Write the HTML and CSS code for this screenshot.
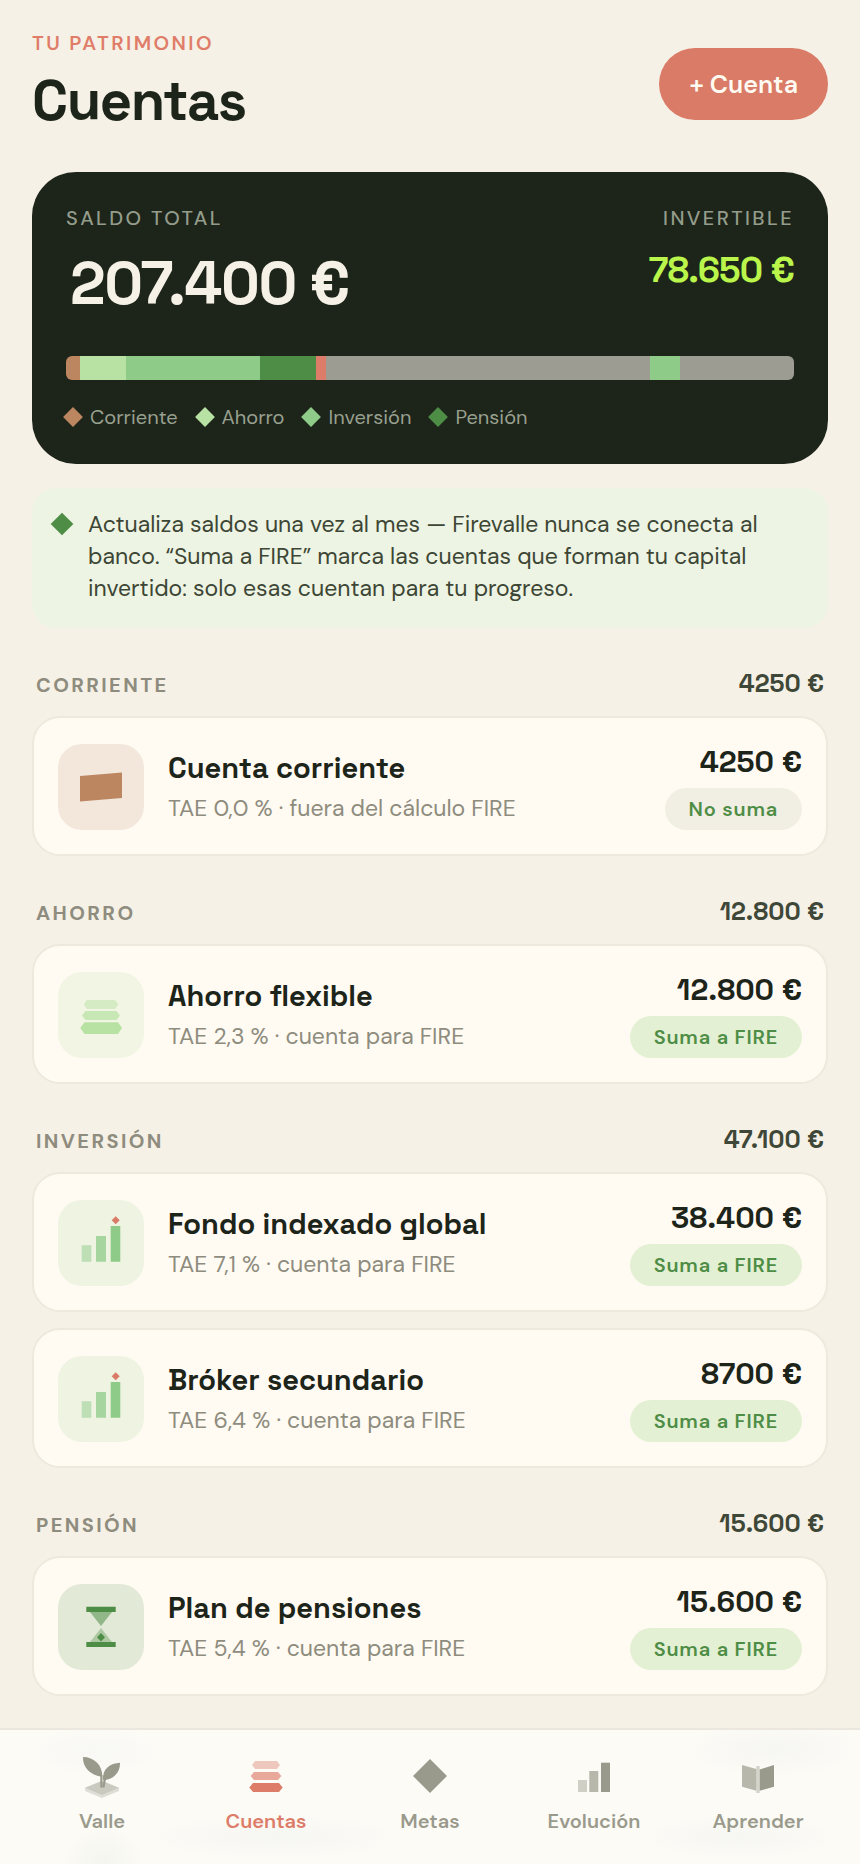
FILE: index.html
```
<!DOCTYPE html>
<html lang="es">
<head>
  <meta charset="UTF-8">
  <meta name="viewport" content="width=device-width, initial-scale=1">
  <title>Firevalle · Cuentas</title>
  <link rel="stylesheet" href="styles.css">
</head>
<body>

  <main class="page">
    <header class="page-header">
      <div>
        <p class="eyebrow">TU PATRIMONIO</p>
        <h1>Cuentas</h1>
      </div>
      <button class="add-btn" type="button">+ Cuenta</button>
    </header>

    <section class="balance">
      <div class="balance-top">
        <div>
          <p class="balance-label">SALDO TOTAL</p>
          <p class="balance-total">207.400 €</p>
        </div>
        <div class="balance-right">
          <p class="balance-label">INVERTIBLE</p>
          <p class="balance-invest">78.650 €</p>
        </div>
      </div>
      <div class="bar">
        <span class="corriente" style="flex-grow: 14"></span>
        <span class="ahorro" style="flex-grow: 46"></span>
        <span class="inversion" style="flex-grow: 134"></span>
        <span class="pension" style="flex-grow: 56"></span>
        <span class="deuda" style="flex-grow: 10"></span>
        <span class="otros" style="flex-grow: 324"></span>
        <span class="inversion" style="flex-grow: 30"></span>
        <span class="otros" style="flex-grow: 114"></span>
      </div>
      <ul class="legend">
        <li><i class="diamond corriente"></i>Corriente</li>
        <li><i class="diamond ahorro"></i>Ahorro</li>
        <li><i class="diamond inversion"></i>Inversión</li>
        <li><i class="diamond pension"></i>Pensión</li>
      </ul>
    </section>

    <aside class="tip">
      <i class="diamond pension"></i>
      <p>Actualiza saldos una vez al mes — Firevalle nunca se conecta al banco. “Suma a FIRE” marca las cuentas que forman tu capital invertido: solo esas cuentan para tu progreso.</p>
    </aside>

    <section class="group">
      <div class="group-head"><h2>CORRIENTE</h2><span>4250 €</span></div>
      <article class="account">
        <svg class="tile tile-corriente" viewBox="0 0 86 86" aria-hidden="true">
          <path d="M22 32 64 28.500V54L22 57.500Z"/>
        </svg>
        <div class="account-info">
          <h3>Cuenta corriente</h3>
          <p>TAE 0,0 % · fuera del cálculo FIRE</p>
        </div>
        <div class="account-side">
          <strong>4250 €</strong>
          <button class="pill pill-off" type="button">No suma</button>
        </div>
      </article>
    </section>

    <section class="group">
      <div class="group-head"><h2>AHORRO</h2><span>12.800 €</span></div>
      <article class="account">
        <svg class="tile tile-ahorro" viewBox="0 0 86 86" aria-hidden="true">
          <path opacity=".5" d="M29 28H57L60.300 32.500 57 37H29L25.700 32.500Z"/>
          <path opacity=".75" d="M27.500 39H58.500L62 43.500 58.500 48H27.500L24 43.500Z"/>
          <path d="M26.500 50.300H60L64 56 60 62H26.500L22.300 56Z"/>
        </svg>
        <div class="account-info">
          <h3>Ahorro flexible</h3>
          <p>TAE 2,3 % · cuenta para FIRE</p>
        </div>
        <div class="account-side">
          <strong>12.800 €</strong>
          <button class="pill" type="button">Suma a FIRE</button>
        </div>
      </article>
    </section>

    <section class="group">
      <div class="group-head"><h2>INVERSIÓN</h2><span>47.100 €</span></div>
      <article class="account">
        <svg class="tile tile-inversion" viewBox="0 0 86 86" aria-hidden="true">
          <path opacity=".5" d="M23.700 45.300H33.300V61.700H23.700Z"/>
          <path opacity=".75" d="M38 36H48V61.700H38Z"/>
          <path d="M52.700 26H62.300V61.700H52.700Z"/>
          <path class="spark" d="M57.700 16.300 61.700 20.300 57.700 24.300 53.700 20.300Z"/>
        </svg>
        <div class="account-info">
          <h3>Fondo indexado global</h3>
          <p>TAE 7,1 % · cuenta para FIRE</p>
        </div>
        <div class="account-side">
          <strong>38.400 €</strong>
          <button class="pill" type="button">Suma a FIRE</button>
        </div>
      </article>
      <article class="account">
        <svg class="tile tile-inversion" viewBox="0 0 86 86" aria-hidden="true">
          <path opacity=".5" d="M23.700 45.300H33.300V61.700H23.700Z"/>
          <path opacity=".75" d="M38 36H48V61.700H38Z"/>
          <path d="M52.700 26H62.300V61.700H52.700Z"/>
          <path class="spark" d="M57.700 16.300 61.700 20.300 57.700 24.300 53.700 20.300Z"/>
        </svg>
        <div class="account-info">
          <h3>Bróker secundario</h3>
          <p>TAE 6,4 % · cuenta para FIRE</p>
        </div>
        <div class="account-side">
          <strong>8700 €</strong>
          <button class="pill" type="button">Suma a FIRE</button>
        </div>
      </article>
    </section>

    <section class="group">
      <div class="group-head"><h2>PENSIÓN</h2><span>15.600 €</span></div>
      <article class="account">
        <svg class="tile tile-pension" viewBox="0 0 86 86" aria-hidden="true">
          <path d="M28.300 22.700H57.700V28H28.300ZM28.300 58H57.700V63H28.300Z"/>
          <path opacity=".55" d="M32 28H54L43 42Z"/>
          <path opacity=".35" d="M43 44 54 58H32Z"/>
          <path d="M43 49 47 53.300 43 57.600 39 53.300Z"/>
        </svg>
        <div class="account-info">
          <h3>Plan de pensiones</h3>
          <p>TAE 5,4 % · cuenta para FIRE</p>
        </div>
        <div class="account-side">
          <strong>15.600 €</strong>
          <button class="pill" type="button">Suma a FIRE</button>
        </div>
      </article>
    </section>
  </main>

  <nav class="tabs">
    <a href="#valle">
      <svg viewBox="0 0 44 44" aria-hidden="true">
        <path opacity=".3" d="M5 33.700 22 40.300 39 33.700V37L22 44 5 37Z"/>
        <path opacity=".5" d="M22 26.700 39 33.700 22 40.700 5 33.700Z"/>
        <path d="M3 3C14 3 22.500 11 22.300 22.700 10 21.500 2.500 13 3 3Z"/>
        <path d="M40 8.700C30 9 22 15 23 26 33 26 40.500 18.500 40 8.700Z"/>
        <path d="M20.300 21H22.500V33.500H20.300ZM23.700 25H26L24.500 33.500H22.500Z"/>
      </svg>
      Valle
    </a>
    <a href="#cuentas" class="active" aria-current="page">
      <svg viewBox="0 0 44 44" aria-hidden="true">
        <path opacity=".4" d="M11 7H33L36 11 33 15H11L8 11Z"/>
        <path opacity=".65" d="M10 18H34L37.300 22 34 26H10L6.700 22Z"/>
        <path d="M9 29H35L38.700 33.500 35 38H9L5.300 33.500Z"/>
      </svg>
      Cuentas
    </a>
    <a href="#metas">
      <svg viewBox="0 0 44 44" aria-hidden="true">
        <path d="M22 5 39 22 22 39 5 22Z"/>
      </svg>
      Metas
    </a>
    <a href="#evolucion">
      <svg viewBox="0 0 44 44" aria-hidden="true">
        <path opacity=".45" d="M6 26H15V38H6Z"/>
        <path opacity=".7" d="M17.300 17H26.300V38H17.300Z"/>
        <path d="M29 8.700H38V38H29Z"/>
      </svg>
      Evolución
    </a>
    <a href="#aprender">
      <svg viewBox="0 0 44 44" aria-hidden="true">
        <path opacity=".7" d="M6 11 20.300 15V36.700L6 32.700Z"/>
        <path opacity=".4" d="M20.300 12H23.700V39H20.300Z"/>
        <path d="M38 11 23.700 15.500V36.700L38 32.700Z"/>
      </svg>
      Aprender
    </a>
  </nav>

</body>
</html>
```

FILE: styles.css
```
:root {
  --ink: #1d241a;
  --ink-soft: #3d4635;
  --muted: #8e8c7e;
  --coral: #d97b66;
  --corriente: #bb8660;
  --ahorro: #b8e1a4;
  --inversion: #8ecb88;
  --pension: #4e8d45;
  --display: 'Space Grotesk', Inter, sans-serif;
}

* {
  box-sizing: border-box;
}

body {
  margin: 0;
  background: #f6f1e6;
  color: var(--ink);
  font-family: 'DM Sans', Inter, sans-serif;
}

h1, h2, h3, p, ul {
  margin: 0;
  padding: 0;
}

.page {
  padding: 28px 32px 168px;
}

.page-header {
  display: flex;
  align-items: center;
  justify-content: space-between;
  margin-bottom: 32px;
}

.eyebrow {
  margin-bottom: 4px;
  color: #df7d69;
  font-size: 20px;
  font-weight: 600;
  line-height: 30px;
  letter-spacing: 0.12em;
}

h1 {
  font-family: var(--display);
  font-size: 56px;
  font-weight: 700;
  line-height: 78px;
  letter-spacing: -0.025em;
}

.add-btn {
  height: 72px;
  padding: 0 30px;
  border: none;
  border-radius: 36px;
  background: var(--coral);
  color: #fffbf2;
  font: inherit;
  font-size: 25px;
  font-weight: 600;
  cursor: pointer;
}

.balance {
  padding: 32px 34px;
  border-radius: 44px;
  background: var(--ink);
}

.balance-top {
  display: flex;
  justify-content: space-between;
}

.balance-right {
  text-align: right;
}

.balance-label {
  color: #949d8b;
  font-size: 20px;
  font-weight: 500;
  line-height: 28px;
  letter-spacing: 0.12em;
}

.balance-total {
  padding: 12px 0 0 4px;
  color: #f6f1e6;
  font-family: var(--display);
  font-size: 60px;
  font-weight: 700;
  line-height: 80px;
  letter-spacing: -0.025em;
}

.balance-invest {
  padding-top: 18px;
  color: #b9f54a;
  font-family: var(--display);
  font-size: 36px;
  font-weight: 600;
  line-height: 40px;
  letter-spacing: -0.025em;
}

.bar {
  display: flex;
  height: 24px;
  margin-top: 32px;
  border-radius: 6px;
  overflow: hidden;
}

.corriente { background: var(--corriente); }
.ahorro { background: var(--ahorro); }
.inversion { background: var(--inversion); }
.pension { background: var(--pension); }
.deuda { background: #dd7c69; }
.otros { background: #9d9c92; }

.legend {
  display: flex;
  flex-wrap: wrap;
  gap: 20px;
  margin-top: 22px;
  color: #98a08f;
  font-size: 20px;
  line-height: 30px;
  list-style: none;
}

.legend li {
  display: flex;
  align-items: center;
  gap: 10px;
}

.diamond {
  flex: none;
  width: 14px;
  height: 14px;
  transform: rotate(45deg);
}

.tip {
  display: flex;
  gap: 18px;
  margin-top: 24px;
  padding: 20px 22px 24px;
  border-radius: 24px;
  background: #edf4e3;
  color: var(--ink-soft);
  font-size: 23px;
  line-height: 32px;
}

.tip .diamond {
  width: 16px;
  height: 16px;
  margin-top: 8px;
}

.group {
  display: grid;
  gap: 16px;
  margin-top: 40px;
}

.group-head {
  display: flex;
  align-items: baseline;
  justify-content: space-between;
  height: 32px;
  padding: 0 4px;
  color: #3f4838;
  font-family: var(--display);
  font-size: 25px;
  font-weight: 600;
  line-height: 30px;
}

.group-head h2 {
  color: var(--muted);
  font-family: 'DM Sans', Inter, sans-serif;
  font-size: 20px;
  font-weight: 700;
  letter-spacing: 0.12em;
}

.account {
  display: flex;
  align-items: flex-end;
  gap: 24px;
  padding: 24px;
  border: 2px solid #edeadd;
  border-radius: 28px;
  background: #fffbf2;
}

.tile {
  flex: none;
  width: 86px;
  height: 86px;
  border-radius: 24px;
}

.tile-corriente { background: #f3e7dc; fill: var(--corriente); }
.tile-ahorro { background: #f2f5e3; fill: var(--ahorro); }
.tile-inversion { background: #eef3e2; fill: var(--inversion); }
.tile-pension { background: #e3e9d7; fill: var(--pension); }

.spark {
  fill: var(--coral);
}

.account-info {
  flex: 1;
  padding-bottom: 2px;
}

.account-info h3 {
  font-family: var(--display);
  font-size: 29px;
  font-weight: 600;
  line-height: 40px;
}

.account-info p {
  color: var(--muted);
  font-size: 23px;
  line-height: 40px;
}

.account-side {
  display: flex;
  flex-direction: column;
  align-items: flex-end;
  gap: 6px;
}

.account-side strong {
  font-family: var(--display);
  font-size: 30px;
  font-weight: 600;
  line-height: 40px;
}

.pill {
  height: 42px;
  padding: 0 24px;
  border: none;
  border-radius: 21px;
  background: #e4f0d4;
  color: var(--pension);
  font: inherit;
  font-size: 20px;
  font-weight: 600;
  letter-spacing: 0.04em;
  cursor: pointer;
}

.pill-off {
  background: #f1eee4;
}

.tabs {
  position: fixed;
  right: 0;
  bottom: 0;
  left: 0;
  display: grid;
  grid-template-columns: repeat(5, 1fr);
  height: 136px;
  padding: 24px 20px 0;
  border-top: 2px solid #ebe7df;
  background:
    radial-gradient(70px 24px at 11% 16%, #f8f8f4, transparent),
    radial-gradient(90px 28px at 90% 14%, #f6f6f2, transparent),
    radial-gradient(130px 22px at 32% 80%, #f6f6f2, transparent),
    radial-gradient(100px 22px at 86% 80%, #f6f6f2, transparent),
    radial-gradient(40px 40px at 12% 100%, #f4f5ef, transparent),
    #fcfbf6;
}

.tabs a {
  display: flex;
  flex-direction: column;
  align-items: center;
  gap: 8px;
  color: #9a9a8c;
  font-size: 20px;
  font-weight: 600;
  line-height: 30px;
  text-decoration: none;
}

.tabs a.active {
  color: #dd7c69;
}

.tabs svg {
  width: 44px;
  height: 44px;
  fill: currentColor;
}
```
